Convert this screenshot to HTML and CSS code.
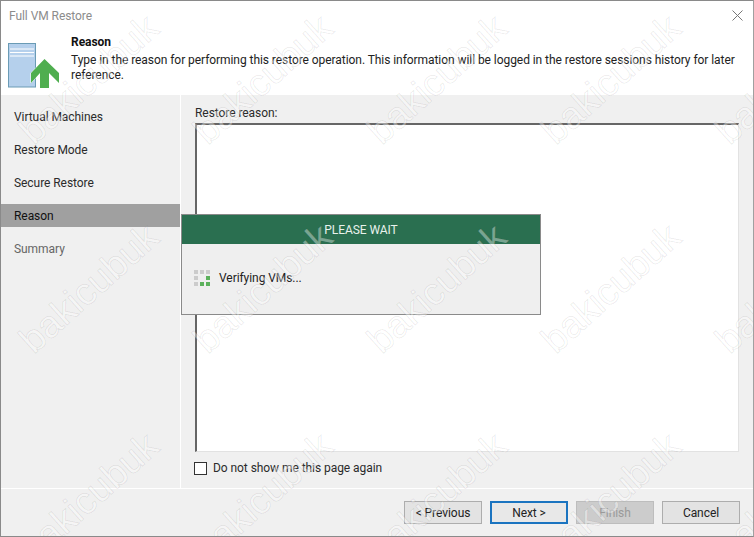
FILE: index.html
```html
<!DOCTYPE html>
<html lang="en">
<head>
    <meta charset="UTF-8">
    <meta name="viewport" content="width=device-width, initial-scale=1.0">
    <title>Full VM Restore</title>
    <link rel="stylesheet" href="styles.css">
</head>
<body>

    <div class="window">
        <div class="titlebar">
            <span class="title">Full VM Restore</span>
            <svg class="close" width="11" height="11" viewBox="0 0 11 11"><path d="M0.5 0.5L10.500 10.500M10.500 0.5L0.5 10.500" stroke="#777" fill="none"/></svg>
        </div>

        <div class="header">
            <svg class="header-icon" width="54" height="46" viewBox="0 0 54 46">
                <rect x="0.5" y="0.5" width="27" height="43.500" fill="#b5d0ec" stroke="#6a9bb5"/>
                <path d="M2 6H26M2 9.500H26M2 13H26" stroke="#fff" fill="none"/>
                <path d="M36.500 16L51 30V40L41 30V45H32V30L23 40V30Z" fill="#4fae4f" stroke="#fff" stroke-width="1" paint-order="stroke"/>
            </svg>
            <div class="header-text">
                <div class="header-title">Reason</div>
                <p>Type in the reason for performing this restore operation. This information will be logged in the restore sessions history for later reference.</p>
            </div>
        </div>

        <div class="main">
            <ul class="steps">
                <li>Virtual Machines</li>
                <li>Restore Mode</li>
                <li>Secure Restore</li>
                <li class="active">Reason</li>
                <li class="muted">Summary</li>
            </ul>
            <div class="content">
                <label class="field-label">Restore reason:</label>
                <div class="textbox"></div>
                <div class="check-row">
                    <span class="checkbox"></span>
                    <span>Do not show me this page again</span>
                </div>
            </div>
        </div>

        <div class="footer">
            <button class="btn">&lt; Previous</button>
            <button class="btn btn-focus">Next &gt;</button>
            <button class="btn btn-disabled">Finish</button>
            <button class="btn">Cancel</button>
        </div>

        <div class="wait-box">
            <div class="wait-title">PLEASE WAIT</div>
            <div class="wait-body">
                <div class="spinner">
                    <i></i><i></i><i></i>
                    <i></i><b></b><i class="on"></i>
                    <i></i><i class="on"></i><i class="on"></i>
                </div>
                <span>Verifying VMs...</span>
            </div>
        </div>

        <div class="watermarks">
            <span>bakicubuk</span><span>bakicubuk</span><span>bakicubuk</span><span>bakicubuk</span><span>bakicubuk</span>
            <span>bakicubuk</span><span>bakicubuk</span><span>bakicubuk</span><span>bakicubuk</span><span>bakicubuk</span>
            <span>bakicubuk</span><span>bakicubuk</span><span>bakicubuk</span><span>bakicubuk</span><span>bakicubuk</span>
        </div>
    </div>

</body>
</html>
```

FILE: styles.css
```css
* { box-sizing: border-box; }
html, body { margin: 0; height: 100%; overflow: hidden; }
body {
    font-family: Roboto, "Open Sans", "Liberation Sans", sans-serif;
    font-size: 12px;
    letter-spacing: -0.06px;
    color: #222;
    background: #fff;
}
.window {
    position: relative;
    width: 754px;
    height: 537px;
    display: flex;
    flex-direction: column;
    border: 1px solid #8a8a8a;
    border-right-color: #a0a0a0;
    overflow: hidden;
}

.titlebar {
    height: 29px;
    flex: none;
    display: flex;
    align-items: center;
    justify-content: space-between;
    padding: 0 10px 0 8px;
    background: #fff;
}
.title { color: #8c8c8c; }

.header {
    height: 65px;
    flex: none;
    display: flex;
    align-items: flex-start;
    background: #fff;
    padding: 4px 0 0 7px;
}
.header-icon { flex: none; margin: 9px 9px 0 0; }
.header-text { width: 672px; }
.header-title { font-weight: 700; color: #111; line-height: 16px; }
.header-text p { margin: 3px 0 0; line-height: 15px; color: #222; }

.main { flex: 1; display: flex; background: #f0f0f0; }
.steps {
    width: 179px;
    flex: none;
    margin: 0;
    padding: 5px 0 0;
    list-style: none;
}
.steps li {
    height: 33px;
    line-height: 35px;
    padding-left: 13px;
    color: #2b2b2b;
}
.steps li.active {
    background: #a0a0a0;
    color: #111;
    height: 23px;
    line-height: 25px;
    margin: 5px 0;
}
.steps li.muted { color: #666; }

.content {
    flex: 1;
    display: flex;
    flex-direction: column;
    border-left: 1px solid #fff;
    padding: 9px 14px 0 14px;
}
.field-label { display: block; line-height: 19px; height: 17px; color: #2b2b2b; }
.textbox {
    height: 329px;
    margin-top: 2px;
    background: #fff;
    border: 1px solid #e2e2e2;
    border-top: 2px solid #666;
    border-left: 2px solid #666;
}
.check-row {
    display: flex;
    align-items: center;
    gap: 6px;
    margin: 9px 0 0 -1px;
    color: #2b2b2b;
}
.checkbox {
    width: 13px;
    height: 13px;
    background: #fff;
    border: 1px solid #333;
}

.footer {
    height: 48px;
    flex: none;
    display: flex;
    justify-content: flex-end;
    align-items: flex-start;
    gap: 8px;
    padding: 12px 13px 0 0;
    background: #f0f0f0;
    border-top: 1px solid #fff;
}
.btn {
    width: 78px;
    height: 23px;
    padding: 0;
    font: inherit;
    letter-spacing: inherit;
    color: #222;
    background: #e3e3e3;
    border: 1px solid #adadad;
}
.btn-focus { border: 2px solid #1b74c0; background: #e8e8e8; }
.btn-disabled { color: #9a9a9a; background: #ccc; border-color: #bdbdbd; }

.wait-box {
    position: absolute;
    left: 180px;
    top: 213px;
    width: 360px;
    height: 101px;
    background: #efefef;
    border: 1px solid #8a8a8a;
}
.wait-title {
    height: 29px;
    line-height: 31px;
    background: #2a6f50;
    color: #e8f2ec;
    text-align: center;
}
.wait-body {
    display: flex;
    align-items: center;
    gap: 9px;
    padding: 26px 0 0 12px;
    color: #222;
}
.spinner {
    display: grid;
    grid-template-columns: repeat(3, 4px);
    grid-auto-rows: 4px;
    gap: 2px;
}
.spinner i { background: #ccc; }
.spinner i.on { background: #5cb15c; }

.watermarks {
    position: absolute;
    left: 1px;
    top: -26px;
    display: grid;
    grid-template-columns: repeat(5, 174px);
    grid-auto-rows: 209px;
    pointer-events: none;
}
.watermarks span {
    display: flex;
    align-items: center;
    justify-content: center;
    transform: rotate(-42deg);
    font-family: "Liberation Sans", sans-serif;
    font-size: 38px;
    letter-spacing: 0;
    white-space: nowrap;
    color: rgba(255, 255, 255, 0.4);
    -webkit-text-stroke: 1px rgba(0, 0, 0, 0.08);
}
```
